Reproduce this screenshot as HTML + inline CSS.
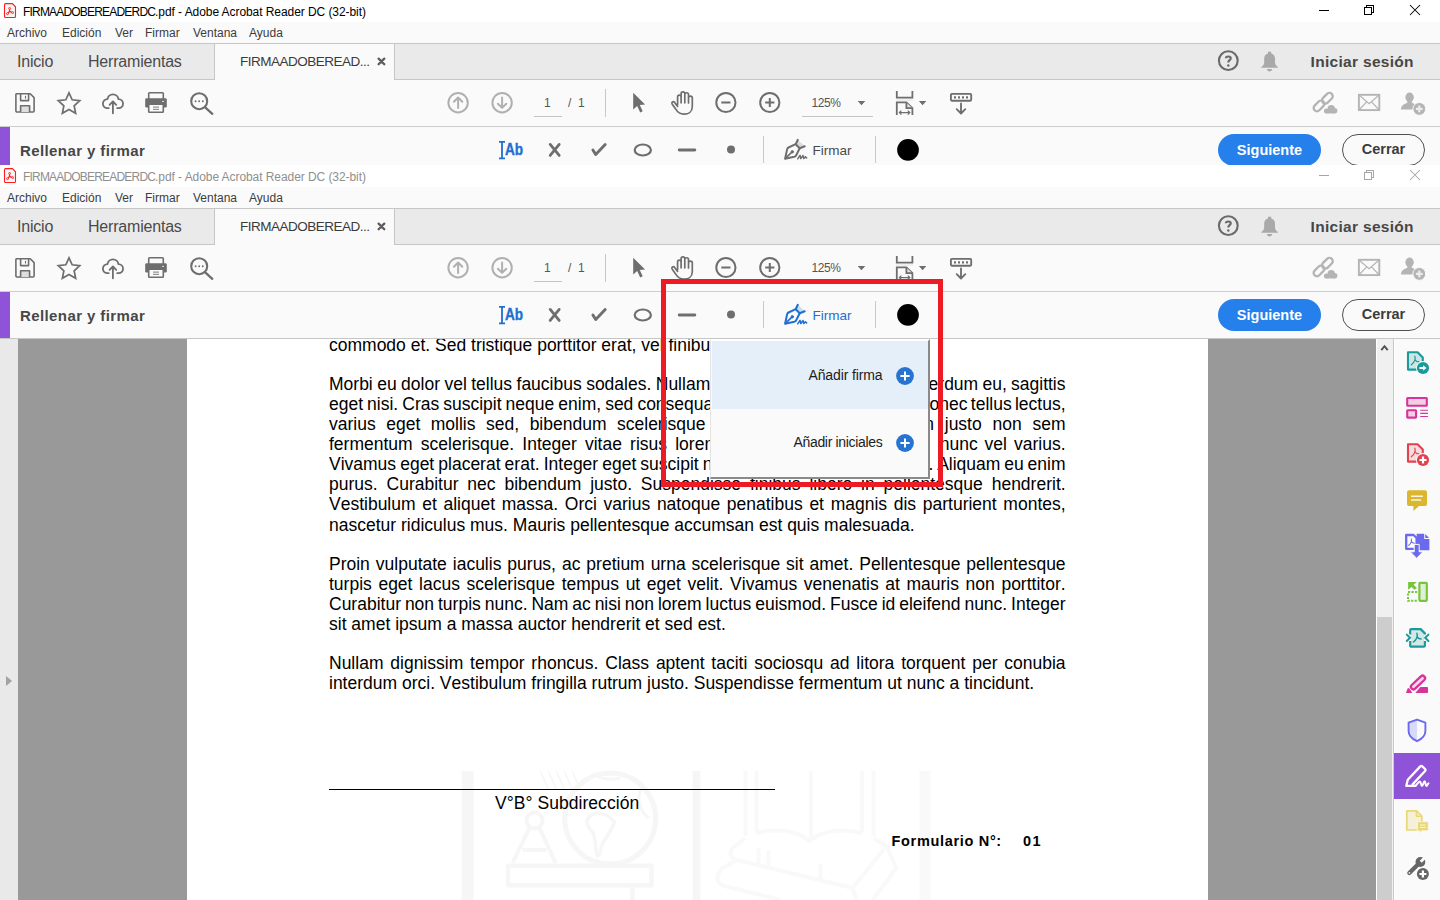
<!DOCTYPE html>
<html>
<head>
<meta charset="utf-8">
<title>FIRMAADOBEREADERDC.pdf - Adobe Acrobat Reader DC (32-bit)</title>
<style>
*{box-sizing:border-box;margin:0;padding:0}
html,body{width:1440px;height:900px;overflow:hidden;background:#fafafa;font-family:"Liberation Sans",sans-serif;}
body{position:relative}
.win{position:absolute;left:0;width:1440px;height:174px;overflow:hidden;background:#fafafa}
#w1{top:0;height:165px}
#w2{top:165px}
.ov{position:absolute;left:0;top:0}
.title{position:absolute;left:0;top:0;width:1440px;height:22px;background:#fff}
.title .txt{position:absolute;left:23px;top:4px;font-size:12px;line-height:16px;color:#000;white-space:nowrap;letter-spacing:-0.07px}
.title .txt b{font-weight:normal;letter-spacing:-0.81px}
#w2 .title .txt{color:#8f8f8f}
.menu{position:absolute;left:0;top:22px;width:1440px;height:21px;background:#fafafa}
.menu span{position:absolute;top:4px;font-size:12px;line-height:15px;color:#3c3c3c;white-space:nowrap}
.tabs{position:absolute;left:0;top:43px;width:1440px;height:37px;background:#eaeaea;border-top:1px solid #c6c6c6;border-bottom:1px solid #c6c6c6}
.tabs .t{position:absolute;top:7.5px;font-size:16px;line-height:20px;color:#4a4a4a;white-space:nowrap;letter-spacing:-0.2px}
.tabs .active{position:absolute;left:214px;top:0;width:181px;height:36px;background:#fafafa;border-left:1px solid #c6c6c6;border-right:1px solid #c6c6c6}
.tabs .active .nm{position:absolute;left:25px;top:9px;font-size:13.5px;line-height:18px;color:#3a3a3a;white-space:nowrap;letter-spacing:-0.5px}
.tabs .login{position:absolute;left:1310.6px;top:7.6px;font-size:15.5px;font-weight:bold;line-height:20px;color:#474747;white-space:nowrap;letter-spacing:0.3px}
.tb{position:absolute;left:0;top:80px;width:1440px;height:47px;background:#fafafa;border-bottom:1px solid #cdcdcd}
.tb .pn{position:absolute;top:15.8px;font-size:12px;line-height:15px;color:#555;white-space:nowrap}
.fs{position:absolute;left:0;top:127px;width:1440px;height:47px;background:#fafafa;border-bottom:1px solid #c6c6c6}
.fs .bar{position:absolute;left:0;top:0;width:10px;height:46px;background:#8e53d6}
.fs .lbl{position:absolute;left:20px;top:14px;font-size:15px;line-height:20px;font-weight:bold;color:#474747;white-space:nowrap;letter-spacing:0.4px}
.fs .ab{position:absolute;left:504.5px;top:13px;font-size:16px;line-height:20px;font-weight:bold;color:#1e6fd0;transform:scaleX(0.85);transform-origin:0 0;-webkit-text-stroke:0.35px #1e6fd0}
.fs .firm{position:absolute;left:812.5px;top:13.6px;font-size:13.5px;line-height:20px;white-space:nowrap}
.btn{position:absolute;top:7px;height:32px;border-radius:16px;font-size:14.5px;font-weight:bold;text-align:center;white-space:nowrap}
.btn.next{left:1218px;width:103px;background:#2680eb;color:#fff;line-height:32px}
.btn.close{left:1342px;width:83px;background:#fafafa;color:#3c3c3c;border:1.6px solid #505050;line-height:29.2px}
#doc{position:absolute;left:0;top:338px;width:1440px;height:562px;background:#999;border-top:1px solid #c6c6c6;overflow:hidden}
#doc .lstrip{position:absolute;left:0;top:0;width:18px;height:561px;background:#e9e9e9}
#doc .lstrip i{position:absolute;left:6px;top:336.7px;width:0;height:0;border-left:6.2px solid #a2a2a2;border-top:5.8px solid transparent;border-bottom:5.8px solid transparent}
#doc .page{position:absolute;left:186.5px;top:0;width:1021px;height:561px;background:#fff}
#doc .sb{position:absolute;left:1376px;top:0;width:18px;height:561px;background:#f0f0f0;border-left:1px solid #fff;border-right:1px solid #c8c8c8}
#doc .sb .thumb{position:absolute;left:0;top:278px;width:15px;height:284px;background:#cdcdcd}
#doc .rp{position:absolute;left:1394px;top:0;width:46px;height:561px;background:#fafafa;border-left:1px solid #fff}
#doc .rp .sel{position:absolute;left:0;top:414px;width:46px;height:46px;background:#8e53d6}
.para{position:absolute;left:142.5px;width:735.5px;font-size:17.5px;line-height:20.1px;color:#000}
.para div{height:20.1px;white-space:nowrap;text-align:justify;text-align-last:justify}
.para div.l{text-align-last:left}
#popup{position:absolute;left:710px;top:0px;width:220px;height:140px;background:#fafafa;border-left:1px solid #e4e4e4;border-top:2px solid #fff;border-right:2px solid #8a8a8a;border-bottom:2px solid #8a8a8a;border-image:none}
#popup .it{position:absolute;left:1px;width:216px;height:68px}
#popup .it.s2 span{top:23.4px;letter-spacing:-0.32px}
#popup .it.h{background:#e5eff9}
#popup .it span{position:absolute;right:45.5px;top:24.3px;font-size:14px;line-height:20px;color:#1c1c1c;white-space:nowrap;letter-spacing:-0.12px}
#red{position:absolute;left:661px;top:279px;width:282px;height:208px;border:5px solid #ed1c24}
.abs{position:absolute}
.page .txt{position:absolute;left:142.5px;top:0;width:736.5px;height:561px;font-size:17.5px;line-height:20.1px;color:#000;font-kerning:none}
.ln{position:absolute;left:0;height:20.1px;white-space:nowrap}
.ln.r{left:auto;right:0}
.page .hr{position:absolute;left:142px;top:450px;width:446.5px;height:1px;background:#000}
.page .vb{position:absolute;left:308.5px;top:453px;font-size:17.5px;line-height:22px;color:#000;white-space:nowrap;letter-spacing:0.05px}
.page .fn,.page .fn2{position:absolute;top:493px;font-size:14.5px;font-weight:bold;line-height:18px;color:#000;white-space:nowrap;letter-spacing:0.68px}
.page .fn{left:705px}.page .fn2{left:836.5px;letter-spacing:1.4px}

</style>
</head>
<body>
<div id="doc">
<div class="lstrip"><i></i></div>
<div class="page">
<svg class="abs" style="left:240px;top:420px" width="560" height="141" viewBox="426.5 759 560 141">
<g fill="none" stroke="#f6f6f6" stroke-width="4.5" stroke-linejoin="round">
<path d="M467.2,771 V900" stroke-width="11.8"/>
<path d="M696,771 V900" stroke-width="7.8"/>
<circle cx="609.7" cy="818.6" r="45.5" stroke-width="5"/>
<path d="M587,819 C592,812 604,810 614,822 C610,834 604,838 601,846 C600,852 599,856 597,856 C594,850 596,838 592,832 C588,828 585,824 587,819 Z" stroke-width="3.5"/>
<path d="M596,776 C604,780 612,780 620,778 M640,790 C636,800 640,812 648,818" stroke-width="3"/>
<circle cx="534" cy="820.5" r="8" stroke-width="4"/>
<path d="M529,828 L512,863 M539,828 L555,863 M522,850 L546,850" stroke-width="4"/>
<path d="M540,771 L548,790 M548,771 L556,790 M556,771 L564,790 M564,771 L572,790 M572,771 L578,786" stroke-width="1.6"/>
<path d="M507.6,865.8 H651 V885.3 H507.6 Z"/>
<path d="M632,887 V900"/>
</g>
<g fill="none" stroke="#f9f9f9" stroke-width="4" stroke-linejoin="round">
<path d="M924.5,771 V900" stroke-width="11"/>
<path d="M745,771 V836 M756,771 V832 M810.6,771 V838 M861.5,771 V832 M873,771 V836"/>
<path d="M756,833 C776,828 796,830 809,841 C822,830 842,828 862,833"/>
<path d="M745,838 L732,848 C728,854 730,858 736,860 L852,888 L886,846 L873,838"/>
<path d="M736,860 L722,868 C714,876 716,884 724,886 L780,900 M852,888 L856,900 M886,846 L896,868 L872,900"/>
<path d="M758,848 V864 M768,850 V866 M820,864 V880"/>
</g>
</svg>
<div class="txt">
<div class="ln" style="top:-4.05px">commodo et. Sed tristique porttitor erat, vel finibus erat.</div>
<div class="ln" style="top:34.95px;word-spacing:-0.430px">Morbi eu dolor vel tellus faucibus sodales. Nullam</div><div class="ln r" style="top:34.95px;word-spacing:-0.600px">interdum eu, sagittis</div>
<div class="ln" style="top:54.95px;word-spacing:-0.830px">eget nisi. Cras suscipit neque enim, sed consequat</div><div class="ln r" style="top:54.95px;word-spacing:-1.600px">Donec tellus lectus,</div>
<div class="ln" style="top:74.95px;word-spacing:5.660px">varius eget mollis sed, bibendum scelerisque</div><div class="ln r" style="top:74.95px;word-spacing:5.900px">in justo non sem</div>
<div class="ln" style="top:94.95px;word-spacing:3.300px">fermentum scelerisque. Integer vitae risus lorem</div><div class="ln r" style="top:94.95px;word-spacing:2.100px">nunc vel varius.</div>
<div class="ln" style="top:114.95px;word-spacing:-0.800px">Vivamus eget placerat erat. Integer eget suscipit nisi</div><div class="ln r" style="top:114.95px;word-spacing:-1.000px">mi. Aliquam eu enim</div>
<div class="ln" style="top:134.95px;word-spacing:4.007px">purus. Curabitur nec bibendum justo. Suspendisse finibus libero in pellentesque hendrerit.</div>
<div class="ln" style="top:154.95px;word-spacing:1.804px">Vestibulum et aliquet massa. Orci varius natoque penatibus et magnis dis parturient montes,</div>
<div class="ln" style="top:175.95px">nascetur ridiculus mus. Mauris pellentesque accumsan est quis malesuada.</div>
<div class="ln" style="top:214.95px;word-spacing:1.081px">Proin vulputate iaculis purus, ac pretium urna scelerisque sit amet. Pellentesque pellentesque</div>
<div class="ln" style="top:234.95px;word-spacing:1.741px">turpis eget lacus scelerisque tempus ut eget velit. Vivamus venenatis at mauris non porttitor.</div>
<div class="ln" style="top:254.95px;word-spacing:-0.956px">Curabitur non turpis nunc. Nam ac nisi non lorem luctus euismod. Fusce id eleifend nunc. Integer</div>
<div class="ln" style="top:274.95px">sit amet ipsum a massa auctor hendrerit et sed est.</div>
<div class="ln" style="top:313.95px;word-spacing:1.967px">Nullam dignissim tempor rhoncus. Class aptent taciti sociosqu ad litora torquent per conubia</div>
<div class="ln" style="top:333.95px">interdum orci. Vestibulum fringilla rutrum justo. Suspendisse fermentum ut nunc a tincidunt.</div>
</div>
<div class="hr"></div>
<div class="vb">V°B° Subdirección</div>
<div class="fn">Formulario N°:</div><div class="fn2">01</div>
</div>
<div class="sb"><div class="thumb"></div></div>
<div class="rp"></div>
<svg class="abs" style="left:1376px;top:0" width="64" height="561" viewBox="1376 339 64 561">
<path d="M1381.3,350.2 L1384.5,346.2 L1387.7,350.2" fill="none" stroke="#505050" stroke-width="1.9"/>
<!-- 1 export -->
<path d="M1408,352.2 H1417.6 L1422.8,357.4 V369.6 H1408 Z" fill="#cfe4e4" stroke="#1b9a9a" stroke-width="2.1" stroke-linejoin="round"/>
<path d="M1414.90,356.10 C1415.60,359.20 1413.90,362.80 1411.30,364.80 M1415.05,359.80 C1416.10,361.30 1417.30,361.90 1419.00,361.90" fill="none" stroke="#1b9a9a" stroke-width="1.2" stroke-linecap="round"/>
<circle cx="1423" cy="368" r="7" fill="#fafafa"/><circle cx="1423" cy="368" r="6.1" fill="#1b9a9a"/>
<path d="M1419.4,368 H1424" stroke="#fff" stroke-width="2"/><path d="M1423.1,365.2 L1426.5,368 L1423.1,370.8 Z" fill="#fff"/>
<!-- 2 layout -->
<g fill="#f3cfe4" stroke="#d9329a" stroke-width="2.1">
<rect x="1407.2" y="398" width="19.6" height="7.7" rx="0.5"/>
<rect x="1407.2" y="410.2" width="8.9" height="7.4" rx="0.5"/>
</g>
<path d="M1420.2,410.3 H1427.9 M1420.2,413.4 H1427.9 M1420.2,416.5 H1427.9" stroke="#d9329a" stroke-width="1.1"/>
<!-- 3 create -->
<path d="M1408,444.2 H1417.6 L1422.8,449.4 V461.6 H1408 Z" fill="#f6dcde" stroke="#e0434f" stroke-width="2.1" stroke-linejoin="round"/>
<path d="M1414.90,448.10 C1415.60,451.20 1413.90,454.80 1411.30,456.80 M1415.05,451.80 C1416.10,453.30 1417.30,453.90 1419.00,453.90" fill="none" stroke="#e0434f" stroke-width="1.2" stroke-linecap="round"/>
<circle cx="1423" cy="460" r="7" fill="#fafafa"/><circle cx="1423" cy="460" r="6.1" fill="#e0434f"/>
<path d="M1419.5,460 H1426.5 M1423,456.5 V463.5" fill="none" stroke="#fff" stroke-width="2.2"/>
<!-- 4 comment -->
<path d="M1409,490.2 H1425 A2,2 0 0 1 1427,492.2 V504 A2,2 0 0 1 1425,506 H1419 L1413.4,511 V506 H1409 A2,2 0 0 1 1407,504 V492.2 A2,2 0 0 1 1409,490.2 Z" fill="#dbb62e"/>
<path d="M1411,496.2 H1422.9 M1411,500 H1421.1" stroke="#fdf6dc" stroke-width="1.6"/>
<!-- 5 combine -->
<path d="M1416.6,533.8 H1424.2 L1429.4,539 V550.2 H1416.6 Z" fill="#6b69ee"/>
<path d="M1424.2,533.6 V539 H1429.6 V533.6 Z" fill="#fafafa"/>
<path d="M1425.2,534 L1429.2,538 H1425.2 Z" fill="#6b69ee"/>
<path d="M1406.2,535 H1413.6 L1416.6,538 V548.8 H1406.2 Z" fill="#fff" stroke="#6b69ee" stroke-width="2.3" stroke-linejoin="round"/>
<path d="M1411.30,538.80 C1411.83,541.14 1410.54,543.86 1408.58,545.37 M1411.41,541.60 C1412.21,542.73 1413.11,543.18 1414.40,543.18" fill="none" stroke="#6b69ee" stroke-width="1.1" stroke-linecap="round"/>
<path d="M1414.2,544.4 H1419.2 V551.8 H1423 L1416.6,558.2 L1410.2,551.8 H1414.2 Z" fill="#6b69ee" stroke="#fafafa" stroke-width="1"/>
<!-- 6 organize -->
<rect x="1419.4" y="582.9" width="7.4" height="17.9" rx="0.7" fill="#e2efd8" stroke="#77c53d" stroke-width="2.2"/>
<path d="M1417.2,592.1 H1408 V600.8 H1417.2" fill="none" stroke="#77c53d" stroke-width="2" stroke-dasharray="2.2 1.3"/>
<path d="M1408.1,582.1 H1416.8 L1413.6,584.8 L1416.9,588 L1414.6,589.8 L1411.6,586.9 L1408.1,589.8 Z" fill="#77c53d"/>
<!-- 7 compress -->
<path d="M1411.4,629.1 H1420.6 L1424.9,633.4 V645.6 A1.1,1.1 0 0 1 1423.8,646.7 H1411.4 A1.1,1.1 0 0 1 1410.2,645.6 V630.2 A1.1,1.1 0 0 1 1411.4,629.1 Z" fill="#d4e8e8" stroke="#1b9a9a" stroke-width="2.2" stroke-linejoin="round"/>
<path d="M1408.6,637.8 H1411.6 M1423.6,637.8 H1426.6" stroke="#fafafa" stroke-width="6.4"/>
<path d="M1417.00,633.30 C1417.70,636.40 1416.00,640.00 1413.40,642.00 M1417.15,637.00 C1418.20,638.50 1419.40,639.10 1421.10,639.10" fill="none" stroke="#1b9a9a" stroke-width="1.5" stroke-linecap="round"/>
<path d="M1406.8,634.6 L1410,637.8 L1406.8,641 M1428.4,634.6 L1425.2,637.8 L1428.4,641" fill="none" stroke="#1b9a9a" stroke-width="2" stroke-linecap="round"/>
<!-- 8 redact -->
<path d="M1420.4,686.9 H1427 A1,1 0 0 1 1428,687.9 V691.9 A1,1 0 0 1 1427,692.9 H1415.3 Z" fill="#d9329a"/>
<path d="M1406,692.9 L1407.7,688.3 L1409.5,688.1 L1412.2,692.9 Z" fill="#d9329a"/>
<rect x="-8.7" y="-2.5" width="17.4" height="5" rx="2.4" transform="translate(1418,682.5) rotate(-43)" fill="none" stroke="#fafafa" stroke-width="4"/>
<rect x="-8.7" y="-2.5" width="17.4" height="5" rx="2.4" transform="translate(1418,682.5) rotate(-43)" fill="#f7d6ea" stroke="#d9329a" stroke-width="2.3"/>
<!-- 9 shield -->
<path d="M1417,719.7 L1425.4,722.6 V731 C1425.4,736 1421,739.4 1417,741.2 Z" fill="#fafafa"/>
<path d="M1417,719.7 L1408.6,722.6 V731 C1408.6,736 1413,739.4 1417,741.2 Z" fill="#d9d9f9"/>
<path d="M1417,719.7 L1425.4,722.6 V731 C1425.4,736 1421,739.4 1417,741.2 C1413,739.4 1408.6,736 1408.6,731 V722.6 Z" fill="none" stroke="#6b69ee" stroke-width="1.9" stroke-linejoin="round"/>
<!-- 10 sign (selected) -->
<rect x="1394" y="753" width="46" height="46" fill="#8e53d6"/>
<g fill="none" stroke="#fff" stroke-width="2.3" stroke-linejoin="round" stroke-linecap="round">
<path d="M1412.6,784.4 L1425.1,771 A1.4,1.4 0 0 0 1425.1,769 L1422.3,766.3 A1.4,1.4 0 0 0 1420.3,766.4 L1407.8,779.7 L1406.3,785.8 H1415.6"/>
<path d="M1415.6,785.8 C1417.4,784.4 1418.6,781.5 1419.8,781.5 C1421.2,781.5 1420.6,785.8 1422,785.9 C1423.2,785.9 1423.4,781.3 1424.6,781.3 C1425.8,781.3 1425.2,785.8 1426.4,785.9 C1427.4,785.9 1427.6,783.7 1428.5,783.3" stroke-width="2"/>
</g>
<!-- 11 comment doc -->
<path d="M1406.8,810.8 H1416.6 L1421.8,816 V830 H1406.8 Z" fill="#f6f1d6" stroke="#e8d879" stroke-width="1.7" stroke-linejoin="round"/>
<path d="M1416.4,811 V816.2 H1421.6" fill="none" stroke="#e8d879" stroke-width="1.5"/>
<path d="M1417.4,821.8 H1428.2 V830.8 H1421.6 L1419.4,833.4 V830.8 H1417.4 Z" fill="#e8d879" stroke="#fafafa" stroke-width="0.7"/>
<path d="M1420,825 H1425.6 M1420,827.4 H1425.6" stroke="#fbf6dc" stroke-width="1"/>
<!-- 12 wrench -->
<path d="M1409.3,873 L1418.4,864" stroke="#666" stroke-width="4.2" stroke-linecap="round"/>
<circle cx="1420.4" cy="862" r="4.9" fill="#666"/>
<rect x="0.2" y="-1.45" width="7" height="2.9" transform="translate(1420.6,861.8) rotate(-45)" fill="#fafafa"/>
<circle cx="1409.4" cy="872.9" r="0.8" fill="#fafafa"/>
<circle cx="1422.9" cy="874" r="7" fill="#fafafa"/><circle cx="1422.9" cy="874" r="6" fill="#666"/>
<path d="M1419.4,874 H1426.4 M1422.9,870.5 V877.5" stroke="#fff" stroke-width="2.2"/>
</svg>
<div id="popup">
<div class="it h" style="top:0"><span>Añadir firma</span></div>
<div class="it s2" style="top:68px"><span>Añadir iniciales</span></div>
<svg class="abs" style="left:0;top:0" width="217" height="136" viewBox="711 341 217 136">
<circle cx="905" cy="376" r="8.9" fill="#2673d1"/><path d="M900.4,376 H909.6 M905,371.4 V380.6" stroke="#fff" stroke-width="2"/>
<circle cx="905" cy="443" r="8.9" fill="#2673d1"/><path d="M900.4,443 H909.6 M905,438.4 V447.6" stroke="#fff" stroke-width="2"/>
</svg>
</div>
</div>
<div class="win" id="w1">
<div class="title"><span class="txt"><b>FIRMAADOBEREADERDC</b>.pdf - Adobe Acrobat Reader DC (32-bit)</span></div>
<div class="menu"><span style="left:7px">Archivo</span><span style="left:62px">Edición</span><span style="left:115px">Ver</span><span style="left:145px">Firmar</span><span style="left:193px">Ventana</span><span style="left:249px">Ayuda</span></div>
<div class="tabs">
<span class="t" style="left:17px">Inicio</span><span class="t" style="left:88px">Herramientas</span>
<div class="active"><span class="nm">FIRMAADOBEREAD...</span></div>
<span class="login">Iniciar sesión</span>
</div>
<div class="tb">
<span class="pn" style="left:544px">1</span><span class="pn" style="left:568px">/</span><span class="pn" style="left:578px">1</span>
<span class="pn" style="left:811.5px;letter-spacing:-0.45px">125%</span>
</div>
<div class="fs"><div class="bar"></div><span class="lbl">Rellenar y firmar</span>
<span class="ab">Ab</span>
<span class="firm" style="color:#4b4b4b">Firmar</span>
<div class="btn next">Siguiente</div><div class="btn close">Cerrar</div>
</div>
<svg class="ov" width="1440" height="174" viewBox="0 0 1440 174">
<!-- pdf icon -->
<path d="M5.6,3.6 H12.4 L15.5,6.8 V16.4 A1.1,1.1 0 0 1 14.4,17.5 H5.6 A1.1,1.1 0 0 1 4.5,16.4 V4.7 A1.1,1.1 0 0 1 5.6,3.6 Z" fill="#f6f6f6" stroke="#ff1c1c" stroke-width="1.1"/>
<g stroke="#ff1c1c" stroke-width="0.9" fill="#fff">
<path d="M9.6,8.6 L9.5,11.4 L7.6,13.6 M9.5,11.4 L12.4,12.6" fill="none" stroke-width="1.2"/>
<circle cx="9.6" cy="8.4" r="0.95"/><circle cx="7.5" cy="13.7" r="0.95"/><circle cx="12.6" cy="12.6" r="0.95"/>
</g>
<!-- window controls -->
<g stroke="#000" stroke-width="1" fill="none" shape-rendering="crispEdges">
<path d="M1319,10.5 H1329"/>
<path d="M1364.5,7.5 H1371.5 V14.5 H1364.5 Z"/>
<path d="M1366.5,7.5 V5.5 H1373.5 V12.5 H1371.5"/>
</g>
<path d="M1410,5 L1420,15 M1420,5 L1410,15" stroke="#000" stroke-width="1.05" fill="none"/>
<!-- tab close x -->
<path d="M378.6,58.6 L384.3,64.2 M384.3,58.6 L378.6,64.2" stroke="#5c5c5c" stroke-width="2.3" stroke-linecap="round" fill="none"/>
<!-- help -->
<circle cx="1228.3" cy="60.6" r="9.4" fill="none" stroke="#6a6a6a" stroke-width="2.1"/>
<path d="M1225.9,58.2 C1225.9,55.9 1230.7,55.9 1230.7,58.2 C1230.7,60.1 1228.3,60.2 1228.3,62.5" fill="none" stroke="#6a6a6a" stroke-width="2.2"/>
<circle cx="1228.3" cy="65.6" r="1.25" fill="#6a6a6a"/>
<!-- bell -->
<path d="M1268,51.8 H1271.2 V53.6 C1273.6,54.2 1275,56 1275,58.6 V62 C1275,64.4 1276.2,66 1278,67 V67.8 H1261.2 V67 C1263,66 1264.2,64.4 1264.2,62 V58.6 C1264.2,56 1265.6,54.2 1268,53.6 Z" fill="#a9a9a9"/>
<path d="M1267,69 H1272.2 C1272.2,70.4 1271,71.4 1269.6,71.4 C1268.2,71.4 1267,70.4 1267,69 Z" fill="#a9a9a9"/>

<!-- ===== toolbar ===== -->
<g fill="none" stroke="#6e6e6e" stroke-width="1.6" stroke-linejoin="round">
<!-- save -->
<path d="M16.6,93.7 H30.2 L34.1,97.6 V111.1 A0.9,0.9 0 0 1 33.2,112 H16.6 A0.9,0.9 0 0 1 15.9,111.1 V94.6 A0.9,0.9 0 0 1 16.6,93.7 Z"/>
<path d="M20.6,94 V100.6 H28.6 V94"/>
<path d="M25.5,95.9 V98.6" stroke-width="1.1"/>
<path d="M20.6,112 V105.7 H29.6 V112" fill="#dedede"/>
<!-- star -->
<polygon points="69.00,92.80 72.17,99.73 79.75,100.61 74.14,105.77 75.64,113.24 69.00,109.50 62.36,113.24 63.86,105.77 58.25,100.61 65.83,99.73" stroke-width="1.7" stroke-linejoin="miter"/>
<!-- cloud upload -->
<path d="M108.7,108.2 H107.4 A4.55,4.55 0 0 1 107.5,99.1 A5.5,5.5 0 0 1 118.4,99.1 A4.55,4.55 0 0 1 118.6,108.2 H117.2" stroke-width="1.8" stroke-linecap="round"/>
<path d="M112.9,113.3 V101.6 M109.6,104.8 L112.9,101.5 L116.2,104.8" stroke-width="1.8" stroke-linecap="round"/>
<!-- printer -->
<rect x="148.7" y="92.8" width="14.6" height="7" rx="0.8" fill="#fafafa"/>
<rect x="145.2" y="98.2" width="21.6" height="9.4" rx="1.4" fill="#6e6e6e" stroke="none"/>
<rect x="148.7" y="104.2" width="14.6" height="8" rx="0.8" fill="#fafafa"/>
<path d="M153,107.1 H159 M153,109.3 H159" stroke-width="0.9"/>
<rect x="162" y="100.9" width="2" height="1" fill="#e0e0e0" stroke="none"/>
<!-- search -->
<circle cx="199.2" cy="101.2" r="8" stroke-width="2.1"/>
<path d="M205.2,107.3 L212.3,113.8" stroke-width="2.3" stroke-linecap="round"/>
<g fill="#6e6e6e" stroke="none"><circle cx="195.6" cy="101.2" r="0.95"/><circle cx="199.2" cy="101.2" r="0.95"/><circle cx="202.8" cy="101.2" r="0.95"/></g>
</g>
<!-- page up / down -->
<g fill="none" stroke="#b0b0b0" stroke-width="2" stroke-linecap="round" stroke-linejoin="round">
<circle cx="458.1" cy="102.7" r="9.7"/>
<path d="M458.1,108 V97.6 M453.9,101.7 L458.1,97.5 L462.3,101.7"/>
<circle cx="502.1" cy="102.7" r="9.7"/>
<path d="M502.1,97.4 V107.8 M497.9,103.7 L502.1,107.9 L506.3,103.7"/>
</g>
<path d="M534,116.5 H562 M802,116.5 H873" stroke="#c4c4c4" stroke-width="1" shape-rendering="crispEdges"/>
<path d="M605.5,89 V117" stroke="#c8c8c8" stroke-width="1" shape-rendering="crispEdges"/>
<!-- cursor -->
<path d="M633.2,92.8 V109.6 L637.2,106 L640.2,112.4 L642.7,111.2 L639.8,105.1 L645.1,104.6 Z" fill="#6e6e6e"/>
<!-- hand -->
<path d="M677.6,104.6 V96.9 A1.75,1.75 0 0 1 681.1,96.9 V102.8 M681.1,97 V93.7 A1.85,1.85 0 0 1 684.8,93.7 V102.8 M684.8,94.6 A1.85,1.85 0 0 1 688.5,94.6 V103 M688.5,98 A1.9,1.9 0 0 1 692.3,98 V106.4 C692.3,111.6 688.4,114.2 684,114.2 C679.6,114.2 677.4,112 675.6,108.9 L672.1,103.9 C671.2,102.4 673.2,100.9 674.6,102.4 L677.6,106.4" fill="none" stroke="#6e6e6e" stroke-width="1.7" stroke-linecap="round" stroke-linejoin="round"/>
<!-- zoom out / in -->
<g fill="none" stroke="#6e6e6e" stroke-width="2">
<circle cx="725.9" cy="102.5" r="9.6"/><path d="M721.3,102.5 H730.5"/>
<circle cx="769.8" cy="102.5" r="9.6"/><path d="M765.2,102.5 H774.4 M769.8,97.9 V107.1"/>
</g>
<path d="M857.7,100.9 H865.3 L861.5,105.3 Z M918.9,100.9 H926.3 L922.6,105.2 Z" fill="#6e6e6e"/>
<!-- fit page -->
<g fill="none" stroke="#6e6e6e" stroke-width="1.8">
<path d="M896.8,91 V97.6 H912.4 V91"/>
<path d="M896.8,115 V102.4 H906.4 L912.4,108.2 V115"/>
<path d="M906.4,102.4 V108.2 H912.4" fill="#e3e3e3"/>
<path d="M899.4,112.6 H909.8 M901.4,110.6 L899.4,112.6 L901.4,114.6 M907.8,110.6 L909.8,112.6 L907.8,114.6" stroke-width="1.25"/>
</g>
<path d="M896,100 H913" stroke="#e4e4e4" stroke-width="1"/>
<!-- ruler/download -->
<g fill="none" stroke="#6e6e6e" stroke-width="1.85" stroke-linecap="round" stroke-linejoin="round">
<rect x="950.9" y="93.9" width="20.3" height="6.8" rx="0.9"/>
<path d="M961,103.4 V113.3 M956.7,109.2 L961,113.5 L965.3,109.2"/>
</g>
<g fill="#6e6e6e"><rect x="954" y="96.3" width="2" height="2.2"/><rect x="958" y="96.3" width="2" height="2.2"/><rect x="962" y="96.3" width="2" height="2.2"/><rect x="966" y="96.3" width="2" height="2.2"/></g>
<!-- link + cloud -->
<g fill="none" stroke="#b4b4b4" stroke-width="2.3">
<rect x="-6.2" y="-3.3" width="12.4" height="6.6" rx="3.3" transform="translate(1319,105.9) rotate(-45)"/>
<rect x="-6.2" y="-3.3" width="12.4" height="6.6" rx="3.3" transform="translate(1327.4,98.2) rotate(-45)"/>
</g>
<g fill="#fafafa" stroke="#fafafa" stroke-width="2"><circle cx="1331.2" cy="108.8" r="3.7"/><circle cx="1334.6" cy="110.7" r="2.8"/><circle cx="1326.4" cy="111" r="2.5"/><rect x="1326.4" y="110.5" width="8.2" height="3"/></g>
<g fill="#b4b4b4"><circle cx="1331.2" cy="108.8" r="3.7"/><circle cx="1334.6" cy="110.7" r="2.8"/><circle cx="1326.4" cy="111" r="2.5"/><rect x="1326.4" y="110.5" width="8.2" height="3"/></g>
<!-- mail -->
<g fill="none" stroke="#b4b4b4" stroke-width="1.5">
<rect x="1358.9" y="94.8" width="20.4" height="15.3" stroke-width="1.9"/>
<path d="M1359,95 L1369.1,103.8 L1379.2,95 M1359,110 L1366.6,101.8 M1379.2,110 L1371.6,101.8" stroke-width="1.2"/>
</g>
<!-- user add -->
<g fill="#b4b4b4">
<ellipse cx="1409.6" cy="97.3" rx="4.2" ry="4.8"/>
<path d="M1401,109.6 C1401,105.2 1404.4,104.4 1407.4,102.6 L1407.4,100.5 H1411.8 L1411.8,102.6 C1414.8,104.4 1418.2,105.2 1418.2,109.6 Z"/>
<circle cx="1419.3" cy="108.9" r="6.4" stroke="#fafafa" stroke-width="1"/>
</g>
<path d="M1415.9,108.9 H1422.7 M1419.3,105.5 V112.3" stroke="#ececec" stroke-width="2.2"/>

<!-- ===== fill & sign bar ===== -->
<path d="M502,141.8 V158.4 M499,141.9 H505 M499,158.3 H505" stroke="#1e6fd0" stroke-width="1.8" fill="none"/>
<g fill="none" stroke="#6e6e6e" stroke-linecap="round" stroke-linejoin="round">
<path d="M550.2,144.4 L559.2,155.4 M559.2,144.4 L550.2,155.4" stroke-width="2.8"/>
<path d="M592.9,150 L595.7,154.6 L605.2,144.5" stroke-width="2.9"/>
<ellipse cx="642.8" cy="150" rx="8.1" ry="5.5" stroke-width="2.2"/>
<path d="M679.2,150 H694.8" stroke-width="2.9"/>
</g>
<circle cx="731" cy="149.5" r="4" fill="#6e6e6e"/>
<path d="M763.5,136 V163 M875.5,136 V163" stroke="#c8c8c8" stroke-width="1" shape-rendering="crispEdges"/>

<g fill="none" stroke="#6e6e6e" stroke-width="2.0" stroke-linejoin="round" stroke-linecap="round">
<path d="M797.8,139.8 L804.7,146.3 L799.7,148.3 L795.7,144.2 Z" fill="#dcdcdc" stroke="none"/>
<path d="M797.8,139.8 L795.7,144.2 L799.7,148.3 L804.7,146.3"/>
<path d="M795.7,144.2 L788.5,147.5 Q787.4,148.1 787.1,149.4 L785.1,158.7 L794.3,156.8 Q795.6,156.5 796.2,155.3 L799.7,148.3"/>
<path d="M785.4,158.4 L791.6,152.4" stroke-width="1.6"/>
<circle cx="792.3" cy="151.8" r="1.2" fill="#6e6e6e" stroke-width="1"/>
<path d="M797.7,158.8 L800,155.3 L800.8,158.6 L803,155.5 L803.8,158.5 L805.4,156.9 L806.6,157.9" stroke-width="1.5"/>
</g>
<circle cx="908" cy="149.9" r="10.85" fill="#000"/>
</svg>
</div>
<div class="win" id="w2">
<div class="title"><span class="txt"><b>FIRMAADOBEREADERDC</b>.pdf - Adobe Acrobat Reader DC (32-bit)</span></div>
<div class="menu"><span style="left:7px">Archivo</span><span style="left:62px">Edición</span><span style="left:115px">Ver</span><span style="left:145px">Firmar</span><span style="left:193px">Ventana</span><span style="left:249px">Ayuda</span></div>
<div class="tabs">
<span class="t" style="left:17px">Inicio</span><span class="t" style="left:88px">Herramientas</span>
<div class="active"><span class="nm">FIRMAADOBEREAD...</span></div>
<span class="login">Iniciar sesión</span>
</div>
<div class="tb">
<span class="pn" style="left:544px">1</span><span class="pn" style="left:568px">/</span><span class="pn" style="left:578px">1</span>
<span class="pn" style="left:811.5px;letter-spacing:-0.45px">125%</span>
</div>
<div class="fs"><div class="bar"></div><span class="lbl">Rellenar y firmar</span>
<span class="ab">Ab</span>
<span class="firm" style="color:#1e6fd0">Firmar</span>
<div class="btn next">Siguiente</div><div class="btn close">Cerrar</div>
</div>
<svg class="ov" width="1440" height="174" viewBox="0 0 1440 174">
<!-- pdf icon -->
<path d="M5.6,3.6 H12.4 L15.5,6.8 V16.4 A1.1,1.1 0 0 1 14.4,17.5 H5.6 A1.1,1.1 0 0 1 4.5,16.4 V4.7 A1.1,1.1 0 0 1 5.6,3.6 Z" fill="#f6f6f6" stroke="#ff1c1c" stroke-width="1.1"/>
<g stroke="#ff1c1c" stroke-width="0.9" fill="#fff">
<path d="M9.6,8.6 L9.5,11.4 L7.6,13.6 M9.5,11.4 L12.4,12.6" fill="none" stroke-width="1.2"/>
<circle cx="9.6" cy="8.4" r="0.95"/><circle cx="7.5" cy="13.7" r="0.95"/><circle cx="12.6" cy="12.6" r="0.95"/>
</g>
<!-- window controls -->
<g stroke="#a6a6a6" stroke-width="1" fill="none" shape-rendering="crispEdges">
<path d="M1319,10.5 H1329"/>
<path d="M1364.5,7.5 H1371.5 V14.5 H1364.5 Z"/>
<path d="M1366.5,7.5 V5.5 H1373.5 V12.5 H1371.5"/>
</g>
<path d="M1410,5 L1420,15 M1420,5 L1410,15" stroke="#a6a6a6" stroke-width="1.05" fill="none"/>
<!-- tab close x -->
<path d="M378.6,58.6 L384.3,64.2 M384.3,58.6 L378.6,64.2" stroke="#5c5c5c" stroke-width="2.3" stroke-linecap="round" fill="none"/>
<!-- help -->
<circle cx="1228.3" cy="60.6" r="9.4" fill="none" stroke="#6a6a6a" stroke-width="2.1"/>
<path d="M1225.9,58.2 C1225.9,55.9 1230.7,55.9 1230.7,58.2 C1230.7,60.1 1228.3,60.2 1228.3,62.5" fill="none" stroke="#6a6a6a" stroke-width="2.2"/>
<circle cx="1228.3" cy="65.6" r="1.25" fill="#6a6a6a"/>
<!-- bell -->
<path d="M1268,51.8 H1271.2 V53.6 C1273.6,54.2 1275,56 1275,58.6 V62 C1275,64.4 1276.2,66 1278,67 V67.8 H1261.2 V67 C1263,66 1264.2,64.4 1264.2,62 V58.6 C1264.2,56 1265.6,54.2 1268,53.6 Z" fill="#a9a9a9"/>
<path d="M1267,69 H1272.2 C1272.2,70.4 1271,71.4 1269.6,71.4 C1268.2,71.4 1267,70.4 1267,69 Z" fill="#a9a9a9"/>

<!-- ===== toolbar ===== -->
<g fill="none" stroke="#6e6e6e" stroke-width="1.6" stroke-linejoin="round">
<!-- save -->
<path d="M16.6,93.7 H30.2 L34.1,97.6 V111.1 A0.9,0.9 0 0 1 33.2,112 H16.6 A0.9,0.9 0 0 1 15.9,111.1 V94.6 A0.9,0.9 0 0 1 16.6,93.7 Z"/>
<path d="M20.6,94 V100.6 H28.6 V94"/>
<path d="M25.5,95.9 V98.6" stroke-width="1.1"/>
<path d="M20.6,112 V105.7 H29.6 V112" fill="#dedede"/>
<!-- star -->
<polygon points="69.00,92.80 72.17,99.73 79.75,100.61 74.14,105.77 75.64,113.24 69.00,109.50 62.36,113.24 63.86,105.77 58.25,100.61 65.83,99.73" stroke-width="1.7" stroke-linejoin="miter"/>
<!-- cloud upload -->
<path d="M108.7,108.2 H107.4 A4.55,4.55 0 0 1 107.5,99.1 A5.5,5.5 0 0 1 118.4,99.1 A4.55,4.55 0 0 1 118.6,108.2 H117.2" stroke-width="1.8" stroke-linecap="round"/>
<path d="M112.9,113.3 V101.6 M109.6,104.8 L112.9,101.5 L116.2,104.8" stroke-width="1.8" stroke-linecap="round"/>
<!-- printer -->
<rect x="148.7" y="92.8" width="14.6" height="7" rx="0.8" fill="#fafafa"/>
<rect x="145.2" y="98.2" width="21.6" height="9.4" rx="1.4" fill="#6e6e6e" stroke="none"/>
<rect x="148.7" y="104.2" width="14.6" height="8" rx="0.8" fill="#fafafa"/>
<path d="M153,107.1 H159 M153,109.3 H159" stroke-width="0.9"/>
<rect x="162" y="100.9" width="2" height="1" fill="#e0e0e0" stroke="none"/>
<!-- search -->
<circle cx="199.2" cy="101.2" r="8" stroke-width="2.1"/>
<path d="M205.2,107.3 L212.3,113.8" stroke-width="2.3" stroke-linecap="round"/>
<g fill="#6e6e6e" stroke="none"><circle cx="195.6" cy="101.2" r="0.95"/><circle cx="199.2" cy="101.2" r="0.95"/><circle cx="202.8" cy="101.2" r="0.95"/></g>
</g>
<!-- page up / down -->
<g fill="none" stroke="#b0b0b0" stroke-width="2" stroke-linecap="round" stroke-linejoin="round">
<circle cx="458.1" cy="102.7" r="9.7"/>
<path d="M458.1,108 V97.6 M453.9,101.7 L458.1,97.5 L462.3,101.7"/>
<circle cx="502.1" cy="102.7" r="9.7"/>
<path d="M502.1,97.4 V107.8 M497.9,103.7 L502.1,107.9 L506.3,103.7"/>
</g>
<path d="M534,116.5 H562 M802,116.5 H873" stroke="#c4c4c4" stroke-width="1" shape-rendering="crispEdges"/>
<path d="M605.5,89 V117" stroke="#c8c8c8" stroke-width="1" shape-rendering="crispEdges"/>
<!-- cursor -->
<path d="M633.2,92.8 V109.6 L637.2,106 L640.2,112.4 L642.7,111.2 L639.8,105.1 L645.1,104.6 Z" fill="#6e6e6e"/>
<!-- hand -->
<path d="M677.6,104.6 V96.9 A1.75,1.75 0 0 1 681.1,96.9 V102.8 M681.1,97 V93.7 A1.85,1.85 0 0 1 684.8,93.7 V102.8 M684.8,94.6 A1.85,1.85 0 0 1 688.5,94.6 V103 M688.5,98 A1.9,1.9 0 0 1 692.3,98 V106.4 C692.3,111.6 688.4,114.2 684,114.2 C679.6,114.2 677.4,112 675.6,108.9 L672.1,103.9 C671.2,102.4 673.2,100.9 674.6,102.4 L677.6,106.4" fill="none" stroke="#6e6e6e" stroke-width="1.7" stroke-linecap="round" stroke-linejoin="round"/>
<!-- zoom out / in -->
<g fill="none" stroke="#6e6e6e" stroke-width="2">
<circle cx="725.9" cy="102.5" r="9.6"/><path d="M721.3,102.5 H730.5"/>
<circle cx="769.8" cy="102.5" r="9.6"/><path d="M765.2,102.5 H774.4 M769.8,97.9 V107.1"/>
</g>
<path d="M857.7,100.9 H865.3 L861.5,105.3 Z M918.9,100.9 H926.3 L922.6,105.2 Z" fill="#6e6e6e"/>
<!-- fit page -->
<g fill="none" stroke="#6e6e6e" stroke-width="1.8">
<path d="M896.8,91 V97.6 H912.4 V91"/>
<path d="M896.8,115 V102.4 H906.4 L912.4,108.2 V115"/>
<path d="M906.4,102.4 V108.2 H912.4" fill="#e3e3e3"/>
<path d="M899.4,112.6 H909.8 M901.4,110.6 L899.4,112.6 L901.4,114.6 M907.8,110.6 L909.8,112.6 L907.8,114.6" stroke-width="1.25"/>
</g>
<path d="M896,100 H913" stroke="#e4e4e4" stroke-width="1"/>
<!-- ruler/download -->
<g fill="none" stroke="#6e6e6e" stroke-width="1.85" stroke-linecap="round" stroke-linejoin="round">
<rect x="950.9" y="93.9" width="20.3" height="6.8" rx="0.9"/>
<path d="M961,103.4 V113.3 M956.7,109.2 L961,113.5 L965.3,109.2"/>
</g>
<g fill="#6e6e6e"><rect x="954" y="96.3" width="2" height="2.2"/><rect x="958" y="96.3" width="2" height="2.2"/><rect x="962" y="96.3" width="2" height="2.2"/><rect x="966" y="96.3" width="2" height="2.2"/></g>
<!-- link + cloud -->
<g fill="none" stroke="#b4b4b4" stroke-width="2.3">
<rect x="-6.2" y="-3.3" width="12.4" height="6.6" rx="3.3" transform="translate(1319,105.9) rotate(-45)"/>
<rect x="-6.2" y="-3.3" width="12.4" height="6.6" rx="3.3" transform="translate(1327.4,98.2) rotate(-45)"/>
</g>
<g fill="#fafafa" stroke="#fafafa" stroke-width="2"><circle cx="1331.2" cy="108.8" r="3.7"/><circle cx="1334.6" cy="110.7" r="2.8"/><circle cx="1326.4" cy="111" r="2.5"/><rect x="1326.4" y="110.5" width="8.2" height="3"/></g>
<g fill="#b4b4b4"><circle cx="1331.2" cy="108.8" r="3.7"/><circle cx="1334.6" cy="110.7" r="2.8"/><circle cx="1326.4" cy="111" r="2.5"/><rect x="1326.4" y="110.5" width="8.2" height="3"/></g>
<!-- mail -->
<g fill="none" stroke="#b4b4b4" stroke-width="1.5">
<rect x="1358.9" y="94.8" width="20.4" height="15.3" stroke-width="1.9"/>
<path d="M1359,95 L1369.1,103.8 L1379.2,95 M1359,110 L1366.6,101.8 M1379.2,110 L1371.6,101.8" stroke-width="1.2"/>
</g>
<!-- user add -->
<g fill="#b4b4b4">
<ellipse cx="1409.6" cy="97.3" rx="4.2" ry="4.8"/>
<path d="M1401,109.6 C1401,105.2 1404.4,104.4 1407.4,102.6 L1407.4,100.5 H1411.8 L1411.8,102.6 C1414.8,104.4 1418.2,105.2 1418.2,109.6 Z"/>
<circle cx="1419.3" cy="108.9" r="6.4" stroke="#fafafa" stroke-width="1"/>
</g>
<path d="M1415.9,108.9 H1422.7 M1419.3,105.5 V112.3" stroke="#ececec" stroke-width="2.2"/>

<!-- ===== fill & sign bar ===== -->
<path d="M502,141.8 V158.4 M499,141.9 H505 M499,158.3 H505" stroke="#1e6fd0" stroke-width="1.8" fill="none"/>
<g fill="none" stroke="#6e6e6e" stroke-linecap="round" stroke-linejoin="round">
<path d="M550.2,144.4 L559.2,155.4 M559.2,144.4 L550.2,155.4" stroke-width="2.8"/>
<path d="M592.9,150 L595.7,154.6 L605.2,144.5" stroke-width="2.9"/>
<ellipse cx="642.8" cy="150" rx="8.1" ry="5.5" stroke-width="2.2"/>
<path d="M679.2,150 H694.8" stroke-width="2.9"/>
</g>
<circle cx="731" cy="149.5" r="4" fill="#6e6e6e"/>
<path d="M763.5,136 V163 M875.5,136 V163" stroke="#c8c8c8" stroke-width="1" shape-rendering="crispEdges"/>

<g fill="none" stroke="#1e6fd0" stroke-width="2.0" stroke-linejoin="round" stroke-linecap="round">
<path d="M797.8,139.8 L804.7,146.3 L799.7,148.3 L795.7,144.2 Z" fill="#c9dcf3" stroke="none"/>
<path d="M797.8,139.8 L795.7,144.2 L799.7,148.3 L804.7,146.3"/>
<path d="M795.7,144.2 L788.5,147.5 Q787.4,148.1 787.1,149.4 L785.1,158.7 L794.3,156.8 Q795.6,156.5 796.2,155.3 L799.7,148.3"/>
<path d="M785.4,158.4 L791.6,152.4" stroke-width="1.6"/>
<circle cx="792.3" cy="151.8" r="1.2" fill="#1e6fd0" stroke-width="1"/>
<path d="M797.7,158.8 L800,155.3 L800.8,158.6 L803,155.5 L803.8,158.5 L805.4,156.9 L806.6,157.9" stroke-width="1.5"/>
</g>
<circle cx="908" cy="149.9" r="10.85" fill="#000"/>
</svg>
</div>
<div id="red"></div>
</body>
</html>
